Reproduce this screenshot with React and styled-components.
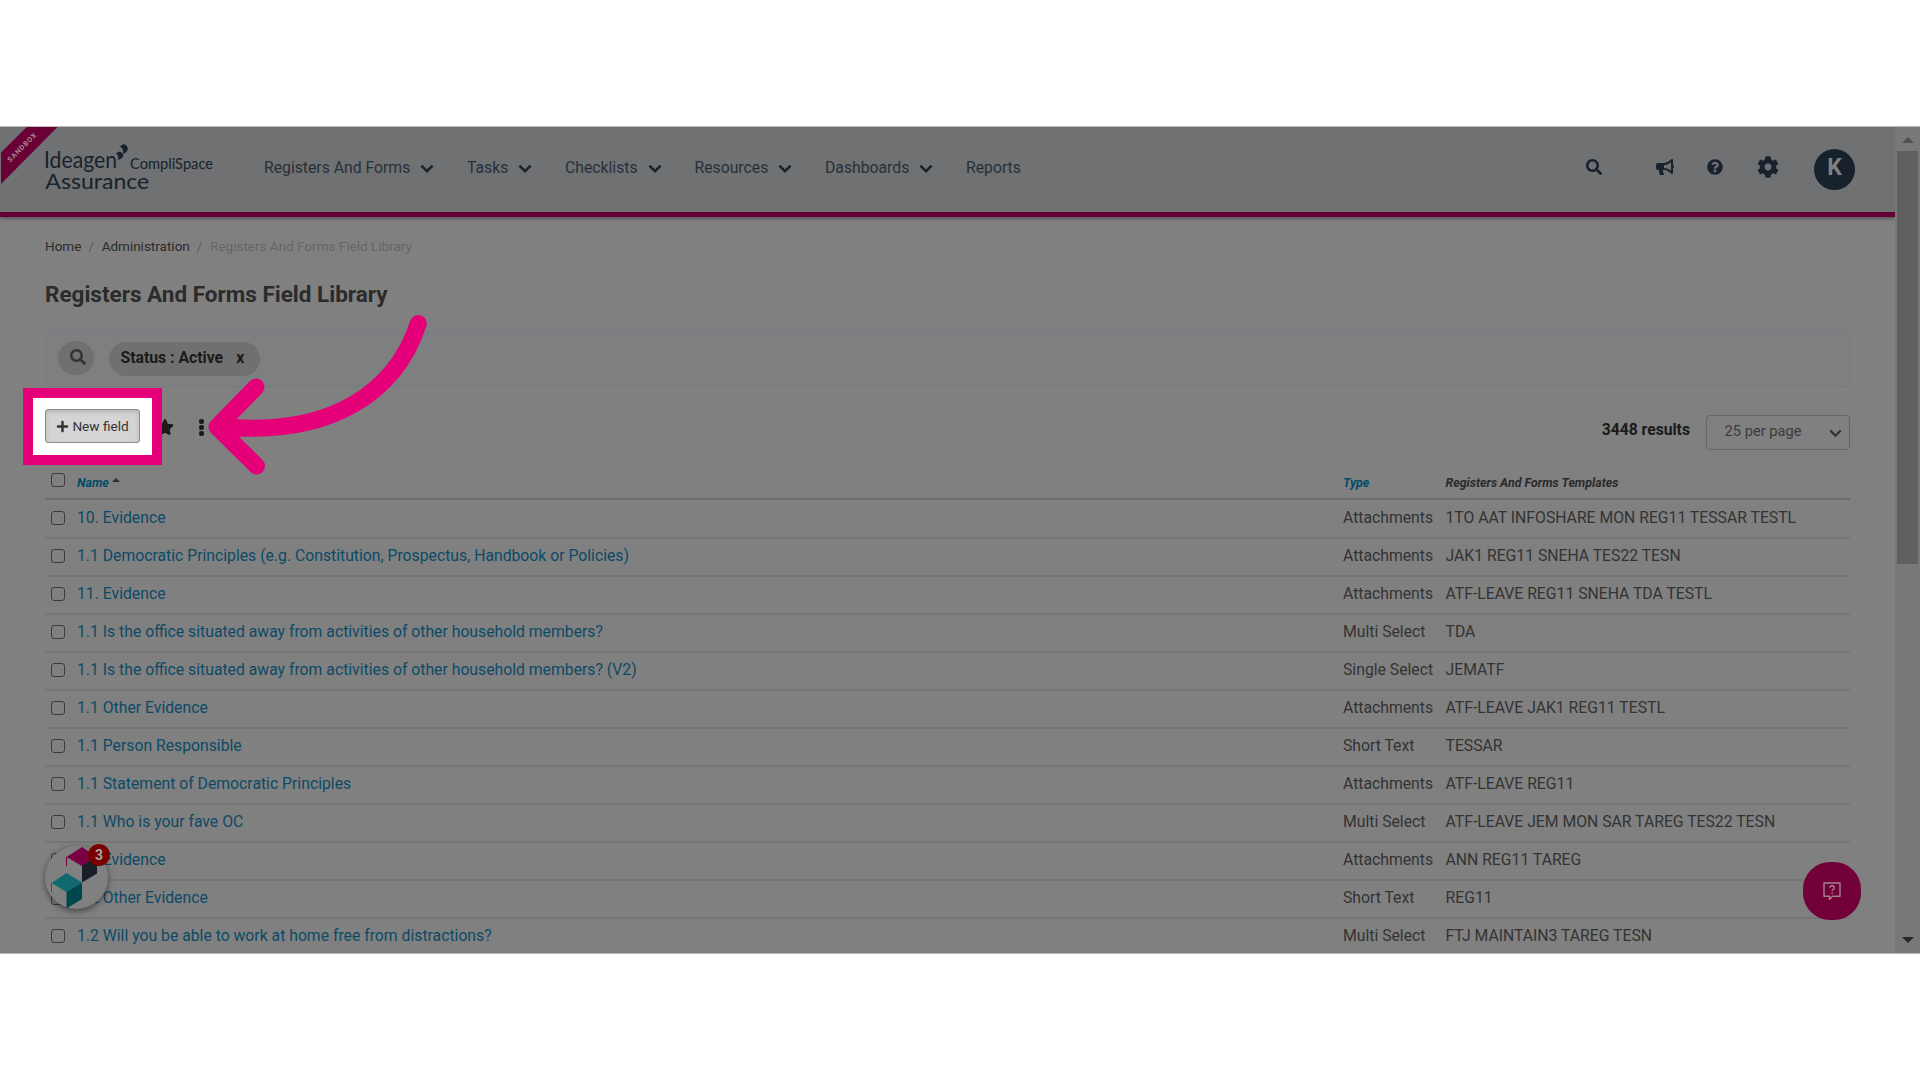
import React from 'react'
import styled, { createGlobalStyle } from 'styled-components'
import { FaSearch, FaBullhorn, FaQuestionCircle, FaCog, FaStar, FaPlus } from 'react-icons/fa'

const navItems = [
  { label: 'Registers And Forms', width: 203, menu: true },
  { label: 'Tasks', width: 98, menu: true },
  { label: 'Checklists', width: 129.5, menu: true },
  { label: 'Resources', width: 130.5, menu: true },
  { label: 'Dashboards', width: 141, menu: true },
  { label: 'Reports', width: 60 },
]

const rows = [
  ['10. Evidence', 'Attachments', '1TO AAT INFOSHARE MON REG11 TESSAR TESTL'],
  ['1.1 Democratic Principles (e.g. Constitution, Prospectus, Handbook or Policies)', 'Attachments', 'JAK1 REG11 SNEHA TES22 TESN'],
  ['11. Evidence', 'Attachments', 'ATF-LEAVE REG11 SNEHA TDA TESTL'],
  ['1.1 Is the office situated away from activities of other household members?', 'Multi Select', 'TDA'],
  ['1.1 Is the office situated away from activities of other household members? (V2)', 'Single Select', 'JEMATF'],
  ['1.1 Other Evidence', 'Attachments', 'ATF-LEAVE JAK1 REG11 TESTL'],
  ['1.1 Person Responsible', 'Short Text', 'TESSAR'],
  ['1.1 Statement of Democratic Principles', 'Attachments', 'ATF-LEAVE REG11'],
  ['1.1 Who is your fave OC', 'Multi Select', 'ATF-LEAVE JEM MON SAR TAREG TES22 TESN'],
  ['12. Evidence', 'Attachments', 'ANN REG11 TAREG'],
  ['1.2 Other Evidence', 'Short Text', 'REG11'],
  ['1.2 Will you be able to work at home free from distractions?', 'Multi Select', 'FTJ MAINTAIN3 TAREG TESN'],
]

const Chevron = ({ size = 14, color = '#18222c' }) => (
  <svg width={size} height={size * 0.66} viewBox="0 0 14 9.2">
    <path d="M1.4 1.6 L7 7.2 L12.6 1.6" fill="none" stroke={color} strokeWidth="2.5" />
  </svg>
)

const Logo = () => (
  <svg width="172" height="60" viewBox="43 142 172 60" fill="#18222c" fontFamily="Lato, sans-serif">
    <text x="44" y="168.3" fontSize="22.5" textLength="73" lengthAdjust="spacingAndGlyphs">Ideagen</text>
    <text x="130" y="168.5" fontSize="14.5" textLength="83" lengthAdjust="spacingAndGlyphs">CompliSpace</text>
    <text x="45.3" y="189.3" fontSize="22" textLength="104" lengthAdjust="spacingAndGlyphs">Assurance</text>
    <path d="M119.800 146.200 L124 144.100 Q127.700 145.500 127.800 149 Q127 153 122.600 153.700 Q124.500 149.500 119.800 146.200z" />
    <path d="M115.900 153.200 L119.700 151.400 Q123.500 153 123.200 156 Q122.300 159.300 117.800 159.800 Q119.500 156 115.900 153.200z" />
  </svg>
)

const Cubes = () => (
  <svg width="63" height="63" viewBox="45 845 63 63">
    <path d="M66.500 856 L82 846 L97 856 L82 865z" fill="#780043" />
    <path d="M66.500 856 V865" stroke="#780043" />
    <path d="M82 864.500 L97 856 V872.500 L82 881.500z" fill="#181d27" />
    <path d="M51.500 882 L66.500 872 L82 881.500 L66.500 891z" fill="#10696f" />
    <path d="M51.500 882 V891" stroke="#10696f" />
    <path d="M66.500 891 L82 881.500 V898 L66.500 907.500z" fill="#00474d" />
  </svg>
)

const App = () => {
  return (
    <>
      <GlobalStyle />
      <Screen>
        <Page>
          <Header>
            <LogoBox><Logo /></LogoBox>
            <Nav>
              {navItems.map((item) => (
                <NavItem key={item.label} $width={item.width}>
                  {item.label}
                  {item.menu && <Chevron />}
                </NavItem>
              ))}
            </Nav>
            <Tools>
              <ToolSlot $width={70}><FaSearch size={16} /></ToolSlot>
              <ToolSlot $width={51}><FaBullhorn size={18} /></ToolSlot>
              <ToolSlot $width={50}><FaQuestionCircle size={16} /></ToolSlot>
              <ToolSlot $width={57.5}><FaCog size={22} /></ToolSlot>
              <Avatar>K</Avatar>
            </Tools>
          </Header>

          <Content>
            <Breadcrumb>
              <Crumb>Home</Crumb>
              <Slash>/</Slash>
              <Crumb>Administration</Crumb>
              <Slash>/</Slash>
              <Crumb $muted>Registers And Forms Field Library</Crumb>
            </Breadcrumb>
            <Title>Registers And Forms Field Library</Title>

            <FilterBar>
              <FilterSearch><FaSearch size={16} /></FilterSearch>
              <FilterPill>Status : Active<span>x</span></FilterPill>
            </FilterBar>

            <ActionBar>
              <Spotlight>
                <NewButton><FaPlus size={13} />New field</NewButton>
              </Spotlight>
              <StarBox><FaStar size={18} /></StarBox>
              <Dots><i /><i /><i /></Dots>
              <Results>3448 results</Results>
              <PageSize>25 per page<Chevron size={13} color="#333" /></PageSize>
            </ActionBar>

            <TableHead>
              <Checkbox $head />
              <HeadCell $link>Name<SortArrow /></HeadCell>
              <HeadCell $link>Type</HeadCell>
              <HeadCell>Registers And Forms Templates</HeadCell>
            </TableHead>
            {rows.map(([name, type, templates]) => (
              <Row key={name}>
                <Checkbox />
                <NameLink>{name}</NameLink>
                <Cell>{type}</Cell>
                <Cell>{templates}</Cell>
              </Row>
            ))}
          </Content>
        </Page>

        <Scrollbar>
          <ScrollArrow $up />
          <Thumb />
          <ScrollArrow />
        </Scrollbar>

        <Ribbon viewBox="0 0 58 58">
          <path d="M26.700 0 H57.500 L1 57 V25.500z" fill="#690036" />
          <text x="0" y="0" transform="translate(10.300 35.500) rotate(-45)">SANDBOX</text>
        </Ribbon>

        <Arrow viewBox="200 305 240 180">
          <path d="M418.300 323.500 C396 392 332 436 225 427 M256 387 L217 427 L256.500 466" />
        </Arrow>

        <CubesButton>
          <Cubes />
          <Badge>3</Badge>
        </CubesButton>
        <HelpButton>
          <svg width="18" height="19" viewBox="0 0 18 19" fill="none" stroke="#a5808f" strokeWidth="1.400">
            <path d="M1 1 H17 V14.300 H9.500 L6.500 17.300 V14.300 H1z" strokeLinejoin="round" />
            <path d="M6.800 5.800 q0.200 -2 2.300 -2 q2.200 0.100 2.200 1.900 q0 1.200 -1.300 1.800 q-0.900 0.500 -0.900 1.500 M9.100 10.300 v1.400" />
          </svg>
        </HelpButton>
      </Screen>
    </>
  )
}

const GlobalStyle = createGlobalStyle`
  * {
    box-sizing: border-box;
  }
  body {
    margin: 0;
    background: #fff;
    font-family: Roboto, sans-serif;
  }
`

const Screen = styled.div`
  position: relative;
  display: flex;
  width: 1920px;
  height: 828px;
  margin-top: 126px;
  border: solid #b9babb;
  border-width: 1px 0;
  background: #808080;
  overflow: hidden;
`

const Page = styled.div`
  width: 1895px;
`

const Header = styled.header`
  display: flex;
  align-items: flex-start;
  height: 90px;
  padding: 15px 40px 0 43px;
  background: #6f7173;
  border-bottom: 5px solid #660034;
  box-shadow: 0 1px 4px rgba(0, 0, 0, 0.45);
  color: #18222c;
`

const LogoBox = styled.div`
  width: 221px;
`

const Nav = styled.nav`
  display: flex;
  padding-top: 14px;
`

const NavItem = styled.div`
  display: flex;
  align-items: center;
  gap: 10px;
  width: ${({ $width }) => $width}px;
  font-size: 15.75px;
  line-height: 23px;
  color: #27303a;
  white-space: nowrap;

  svg {
    margin-top: 2px;
  }
`

const Tools = styled.div`
  display: flex;
  align-items: center;
  height: 52px;
  margin-left: auto;
`

const ToolSlot = styled.div`
  display: flex;
  align-items: center;
  width: ${({ $width }) => $width}px;
  margin-top: -2px;
`

const Avatar = styled.div`
  width: 41px;
  height: 41px;
  margin-top: 2px;
  border-radius: 50%;
  background: #18222c;
  color: #808080;
  font-size: 23px;
  font-weight: 700;
  line-height: 38px;
  text-align: center;
`

const Content = styled.main`
  padding: 0 45px;
`

const Breadcrumb = styled.div`
  display: flex;
  padding-top: 18px;
  font-size: 13.5px;
  line-height: 23px;
`

const Crumb = styled.span`
  color: ${({ $muted }) => ($muted ? '#666' : '#2b2b2b')};
`

const Slash = styled.span`
  width: 20.3px;
  padding-left: 7px;
  color: #5c5c5c;
`

const Title = styled.h1`
  margin: 21px 0 0;
  font-size: 22.5px;
  font-weight: 700;
  line-height: 30px;
  color: #2b2b2b;
`

const FilterBar = styled.div`
  display: flex;
  align-items: center;
  gap: 15px;
  height: 55px;
  margin: 23px 0 1px;
  padding: 0 0 3px 12px;
  background: #7d7f81;
  border: 1px solid #737c84;
  border-radius: 3px;
`

const FilterSearch = styled.div`
  display: flex;
  align-items: center;
  justify-content: center;
  width: 36px;
  height: 34px;
  padding: 0 0 2px 3px;
  border-radius: 50%;
  background: #707070;
  color: #333;
`

const FilterPill = styled.div`
  width: 151px;
  height: 34px;
  margin-top: 2px;
  padding-left: 11.5px;
  border-radius: 17px;
  background: #707070;
  color: #1a1a1a;
  font-size: 15.75px;
  font-weight: 700;
  line-height: 31px;

  span {
    margin-left: 13px;
  }
`

const ActionBar = styled.div`
  display: flex;
  align-items: flex-start;
  height: 77px;
`

const Spotlight = styled.div`
  flex: none;
  width: 139px;
  height: 77px;
  margin-left: -22px;
  padding: 11px 12px;
  border: 10px solid #e5007a;
  background: #fff;
  z-index: 1;
`

const NewButton = styled.div`
  display: flex;
  align-items: center;
  justify-content: center;
  gap: 3px;
  width: 95px;
  height: 34px;
  border: 1px solid #8c8c8c;
  border-radius: 3px;
  background: #d4d4d4;
  box-shadow: inset 0 2px 4px rgba(0, 0, 0, 0.15);
  color: #333;
  font-size: 13.6px;
  white-space: nowrap;
`

const StarBox = styled.div`
  width: 35px;
  margin-left: -6px;
  padding-top: 30px;
  color: #1a1a1a;
`

const Dots = styled.div`
  display: flex;
  flex-direction: column;
  gap: 1px;
  margin-left: 8px;
  padding-top: 31px;

  i {
    width: 5px;
    height: 5px;
    border-radius: 2px;
    background: #1a1a1a;
  }
`

const Results = styled.div`
  margin: 30px 16px 0 auto;
  color: #1a1a1a;
  font-size: 15.7px;
  font-weight: 700;
  line-height: 23px;
`

const PageSize = styled.div`
  display: flex;
  justify-content: space-between;
  width: 144px;
  height: 35px;
  margin-top: 27px;
  padding: 0 7px 0 17.5px;
  border: 1px solid #666;
  border-radius: 4px;
  color: #3b3b3b;
  font-size: 14.7px;
  line-height: 31px;

  svg {
    margin-top: 13px;
  }
`

const columns = '32px 1266px 102.500px 1fr'

const TableHead = styled.div`
  display: grid;
  grid-template-columns: ${columns};
  height: 35px;
  margin-bottom: 1px;
  border-bottom: 2px solid #6c6c6c;
`

const HeadCell = styled.div`
  padding-top: 10px;
  color: ${({ $link }) => ($link ? '#004c66' : '#2b2b2b')};
  font-size: 12.4px;
  font-style: italic;
  font-weight: 700;
  line-height: 16px;
`

const SortArrow = styled.span`
  display: inline-block;
  margin: 0 0 5px 3px;
  border: 4px solid transparent;
  border-top: 0;
  border-bottom: 4px solid #2b2b2b;
`

const Row = styled.div`
  display: grid;
  grid-template-columns: ${columns};
  height: 38px;
  border-bottom: 2px solid #757575;
  font-size: 15.75px;
  line-height: 34px;
  white-space: nowrap;
`

const Checkbox = styled.span`
  width: 14px;
  height: 14px;
  margin: ${({ $head }) => ($head ? '8px' : '10px')} 0 0 5.5px;
  border: 1.5px solid #3b3b3b;
  border-radius: 3px;
`

const NameLink = styled.a`
  color: #0c4a66;
`

const Cell = styled.div`
  color: #333;
`

const Scrollbar = styled.div`
  display: flex;
  flex-direction: column;
  align-items: center;
  width: 25px;
  background: #787878;
`

const ScrollArrow = styled.div`
  margin: ${({ $up }) => ($up ? '10px 0 8px' : 'auto 0 10px')};
  border: 6px solid transparent;
  ${({ $up }) => ($up ? 'border-top: 0; border-bottom: 6px solid #505050;' : 'border-bottom: 0; border-top: 6px solid #282828;')}
`

const Thumb = styled.div`
  width: 21px;
  height: 413px;
  background: #606060;
`

const Ribbon = styled.svg`
  position: absolute;
  top: 0;
  left: 0;
  width: 58px;
  height: 58px;

  text {
    fill: #a38a95;
    font-size: 7px;
    font-weight: 700;
    letter-spacing: 0.9px;
  }
`

const Arrow = styled.svg`
  position: absolute;
  top: 178px;
  left: 200px;
  width: 240px;
  height: 180px;
  z-index: 2;

  path {
    fill: none;
    stroke: #e5007a;
    stroke-width: 17px;
    stroke-linecap: round;
    stroke-linejoin: round;
  }
`

const CubesButton = styled.div`
  position: absolute;
  top: 718.5px;
  left: 45px;
  width: 63px;
  height: 63px;
  border-radius: 50%;
  background: #808080;
  box-shadow: 0 2px 6px rgba(0, 0, 0, 0.5);
`

const Badge = styled.div`
  position: absolute;
  top: -2px;
  left: 43px;
  width: 22px;
  height: 22px;
  border-radius: 50%;
  background: #780000;
  color: #a5a5a5;
  font-size: 14px;
  font-weight: 700;
  line-height: 22px;
  text-align: center;
`

const HelpButton = styled.div`
  position: absolute;
  top: 735px;
  left: 1803px;
  display: flex;
  align-items: center;
  justify-content: center;
  width: 58px;
  height: 58px;
  border-radius: 27px;
  background: #720039;
`

export default App
